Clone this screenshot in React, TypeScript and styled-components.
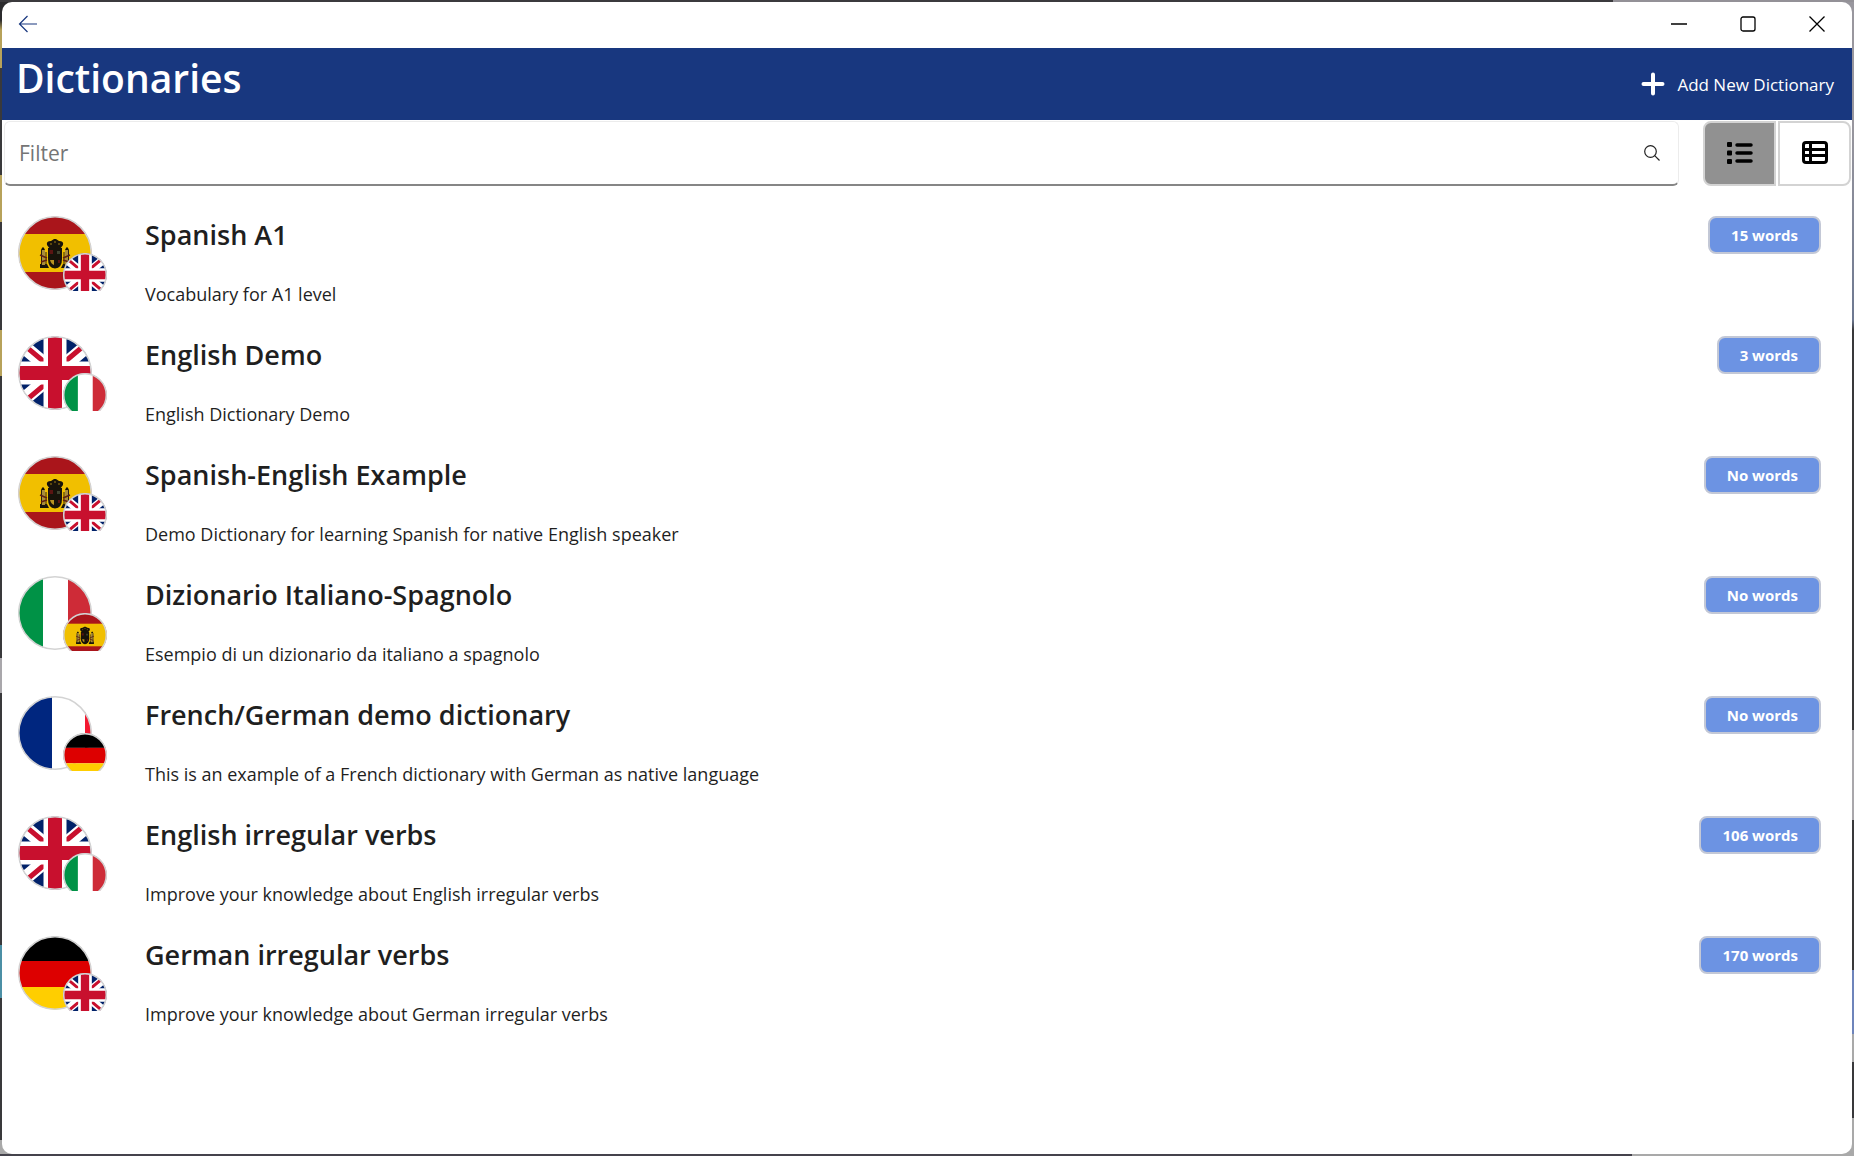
import React, { useId, useState } from "react";
import styled, { createGlobalStyle } from "styled-components";

const GlobalStyle = createGlobalStyle`
  * { box-sizing: border-box; }
  html, body { margin: 0; }
  body { font-family: "Open Sans", "Noto Sans", sans-serif; color: #1f1f1f; }
  button, input { font: inherit; color: inherit; }
`;

const Desktop = styled.div`
  min-height: 100vh;
  padding: 2px;
  display: flex;
  background:
    linear-gradient(90deg, #3b3a3d 87%, #939197 87%) top / 100% 2px no-repeat,
    linear-gradient(90deg, #45434c 88%, #a9a9a9 88%) bottom / 100% 2px no-repeat,
    linear-gradient(#99979e 0 120px, #6d7891 320px, #39393b 330px 730px, #a9a7ab 730px 820px,
      #39393b 820px 970px, #6e84bb 970px 1034px, #a9a9a9 1034px 1062px, #39393b 1062px 1118px, #a9a9a9 1118px)
      right / 50% 100% no-repeat,
    linear-gradient(#2b2b2d 0 20px, #b7a25a 30px 68px, #39393b 68px 175px, #b7a25a 175px 222px, #39393b 222px 330px,
      #b7a25a 330px 376px, #39393b 376px 658px, #a9a7ab 658px 693px, #39393b 693px 945px, #4b8fa5 945px 998px,
      #39393b 998px 1140px, #a9a9a9 1140px) left / 50% 100% no-repeat;
`;

const Window = styled.div`
  flex: 1;
  display: flex;
  flex-direction: column;
  background: #fff;
  border-radius: 10px;
  overflow: hidden;
`;

const TitleBar = styled.div`
  height: 46px;
  padding: 0 1px 2px 0;
  display: flex;
  justify-content: space-between;
  align-items: stretch;
`;

const Captions = styled.div`
  display: flex;
`;

const CaptionButton = styled.button<{ $width: number }>`
  width: ${(p) => p.$width}px;
  padding: 0;
  border: 0;
  background: none;
  display: grid;
  place-items: center;
`;

const Header = styled.header`
  height: 72px;
  padding: 0 18px 0 14px;
  display: flex;
  justify-content: space-between;
  background: #18377f;
  color: #fff;
`;

const Heading = styled.h1`
  margin: 0;
  font-size: 39px;
  line-height: 60px;
  font-weight: 600;
`;

const AddButton = styled.button`
  padding: 0;
  border: 0;
  background: none;
  display: flex;
  align-items: center;
  gap: 12px;
  font-size: 17px;
`;

const Toolbar = styled.div`
  height: 66px;
  padding: 1px 1px 0 2px;
  display: flex;
  gap: 24px;
`;

const FilterBox = styled.label`
  flex: 1;
  display: flex;
  align-items: center;
  padding: 0 18px 0 14px;
  border: 1px solid #ececec;
  border-bottom: 2px solid #868686;
  border-radius: 6px;
`;

const FilterInput = styled.input`
  flex: 1;
  min-width: 0;
  padding: 0;
  border: 0;
  outline: 0;
  background: none;
  font-size: 21px;
  line-height: 32px;
  &::placeholder { color: #757575; opacity: 1; }
`;

const ViewSwitch = styled.div`
  display: flex;
  gap: 2px;
`;

const ViewButton = styled.button<{ $side: "left" | "right" }>`
  width: 73px;
  padding: 0 0 2px;
  display: grid;
  place-items: center;
  border: 2px solid #d3d3d3;
  border-radius: ${(p) => (p.$side === "left" ? "8px 0 0 8px" : "0 8px 8px 0")};
  background: ${(p) => (p["aria-pressed"] ? "#919191" : "#fff")};
`;

const List = styled.ul`
  flex: 1;
  margin: 0;
  padding: 20px 31px 0 16px;
  list-style: none;
`;

const Row = styled.li`
  height: 120px;
  padding-top: 10px;
  display: grid;
  grid-template-columns: 90px 1fr auto;
  column-gap: 37px;
  align-items: start;
`;

const Avatar = styled.div`
  position: relative;
  width: 90px;
  height: 75px;
  overflow: hidden;
`;

const BadgeFlag = styled.div`
  position: absolute;
  left: 45px;
  top: 37px;
`;

const FlagSvg = styled.svg`
  display: block;
`;

const Name = styled.h2`
  margin: 0;
  font-size: 27px;
  line-height: 38px;
  font-weight: 600;
`;

const Description = styled.p`
  margin: 25px 0 0;
  font-size: 18px;
  line-height: 30px;
`;

const Count = styled.span`
  height: 38px;
  padding: 0 21px;
  display: flex;
  align-items: center;
  border: 2px solid #c3c8d6;
  border-radius: 8px;
  background: #6c93e3;
  color: #fff;
  font-size: 15px;
  font-weight: 700;
`;

type Country = "es" | "gb" | "it" | "fr" | "de";

function Spain() {
  return (
    <>
      <rect width="74" height="74" fill="#aa151b" />
      <rect y="18" width="74" height="38" fill="#f1bf00" />
      <g fill="#17130a">
        <path d="M29 29q-1-4 4-4l3-2h2l3 2q5 0 4 4l-3 4H32z" />
        <path d="M30 32h14v11q0 9-7 9.500Q30 52 30 43z" />
        <path d="M23 34l1-2 1-1 1 1 1 2zM47 34l1-2 1-1 1 1 1 2z" />
        <path d="M22 48h7l2 4h-9zM45 48h7v4h-9z" />
      </g>
      <path d="M25 34V49M49 34V49" stroke="#a98c3d" strokeWidth="4" />
      <path d="M23.500 34V49M28 36V50M46 36V50M50.500 34V49" stroke="#2a210c" strokeWidth="1" />
      <path d="M22 39l7 3M52 39l-7 3M23 46l6-2M51 46l-6-2" stroke="#5f2114" strokeWidth="1.500" />
      <path d="M31.500 34h3.500v4h-3.500zM40 44h2v3h-2z" fill="#5a1512" />
      <path d="M39 35h3v3h-3z" fill="#3e4430" />
      <path d="M32 44h4v5q-3-1-4-5z" fill="#b89322" />
      <path d="M32 28h2M36 26h2M40 28h2" stroke="#a07c13" strokeWidth="1" />
    </>
  );
}

function Britain() {
  return (
    <>
      <rect width="74" height="74" fill="#012169" />
      <path d="M-13 -5L87 79M-13 79L87 -5" stroke="#fff" strokeWidth="14" />
      <path d="M37 35L-13 -7M37 39L87 81M37 40L-13 82M37 34L87 -8" stroke="#c8102e" strokeWidth="5" />
      <path d="M37 0V74M0 37H74" stroke="#fff" strokeWidth="23" />
      <path d="M37 0V74M0 37H74" stroke="#c8102e" strokeWidth="14" />
    </>
  );
}

function Flag({ country, size }: { country: Country; size: number }) {
  const id = useId();
  return (
    <FlagSvg width={size} height={size} viewBox="0 0 74 74" aria-hidden="true">
      <clipPath id={id}>
        <circle cx="37" cy="37" r="36.500" />
      </clipPath>
      <g clipPath={`url(#${id})`}>
        {country === "es" && <Spain />}
        {country === "gb" && <Britain />}
        {country === "it" && (
          <>
            <rect width="74" height="74" fill="#fff" />
            <rect width="25" height="74" fill="#009246" />
            <rect x="50" width="24" height="74" fill="#ce2b37" />
          </>
        )}
        {country === "fr" && (
          <>
            <rect width="74" height="74" fill="#fff" />
            <rect width="34" height="74" fill="#00267f" />
            <rect x="67" width="7" height="74" fill="#f31830" />
          </>
        )}
        {country === "de" && (
          <>
            <rect width="74" height="25" fill="#000" />
            <rect y="25" width="74" height="26" fill="#d00" />
            <rect y="51" width="74" height="23" fill="#ffce00" />
          </>
        )}
      </g>
      <circle cx="37" cy="37" r={size > 50 ? 36.2 : 35.8} fill="none" stroke="#d3d3d3" strokeWidth={size > 50 ? 1.5 : 2.5} />
    </FlagSvg>
  );
}

interface Dictionary {
  name: string;
  description: string;
  count: string;
  from: Country;
  to: Country;
}

const dictionaries: Dictionary[] = [
  { name: "Spanish A1", description: "Vocabulary for A1 level", count: "15 words", from: "es", to: "gb" },
  { name: "English Demo", description: "English Dictionary Demo", count: "3 words", from: "gb", to: "it" },
  { name: "Spanish-English Example", description: "Demo Dictionary for learning Spanish for native English speaker", count: "No words", from: "es", to: "gb" },
  { name: "Dizionario Italiano-Spagnolo", description: "Esempio di un dizionario da italiano a spagnolo", count: "No words", from: "it", to: "es" },
  { name: "French/German demo dictionary", description: "This is an example of a French dictionary with German as native language", count: "No words", from: "fr", to: "de" },
  { name: "English irregular verbs", description: "Improve your knowledge about English irregular verbs", count: "106 words", from: "gb", to: "it" },
  { name: "German irregular verbs", description: "Improve your knowledge about German irregular verbs", count: "170 words", from: "de", to: "gb" },
];

export default function App() {
  const [view, setView] = useState<"list" | "table">("list");
  const [filter, setFilter] = useState("");
  const shown = dictionaries.filter((d) => d.name.toLowerCase().includes(filter.toLowerCase()));

  return (
    <>
      <GlobalStyle />
      <Desktop>
        <Window>
          <TitleBar>
            <CaptionButton $width={52} aria-label="Back">
              <svg width="20" height="18" viewBox="0 0 20 18" fill="none" stroke="#18377f" strokeWidth="1.200">
                <path d="M19 9H2M9.500 1L1.500 9L9.500 17" />
              </svg>
            </CaptionButton>
            <Captions>
              <CaptionButton $width={69} aria-label="Minimize">
                <svg width="16" height="16" viewBox="0 0 16 16" stroke="#000" strokeWidth="1.300">
                  <path d="M0 8H16" />
                </svg>
              </CaptionButton>
              <CaptionButton $width={69} aria-label="Maximize">
                <svg width="16" height="16" viewBox="0 0 16 16" fill="none" stroke="#000" strokeWidth="1.300">
                  <rect x="1" y="1" width="14" height="14" rx="2" />
                </svg>
              </CaptionButton>
              <CaptionButton $width={69} aria-label="Close">
                <svg width="16" height="16" viewBox="0 0 16 16" stroke="#000" strokeWidth="1.300">
                  <path d="M.5 .5L15.500 15.500M15.500 .5L.5 15.500" />
                </svg>
              </CaptionButton>
            </Captions>
          </TitleBar>
          <Header>
            <Heading>Dictionaries</Heading>
            <AddButton>
              <svg width="24" height="24" viewBox="0 0 24 24" stroke="#fff" strokeWidth="4" strokeLinecap="round">
                <path d="M12 2.500V21.500M2.500 12H21.500" />
              </svg>
              Add New Dictionary
            </AddButton>
          </Header>
          <Toolbar>
            <FilterBox>
              <FilterInput aria-label="Filter" placeholder="Filter" value={filter} onChange={(e) => setFilter(e.target.value)} />
              <svg width="16" height="16" viewBox="0 0 16 16" fill="none" stroke="#222" strokeWidth="1.200">
                <circle cx="6.500" cy="6.500" r="5.800" />
                <path d="M10.700 10.700L15.500 15.500" />
              </svg>
            </FilterBox>
            <ViewSwitch>
              <ViewButton $side="left" aria-label="List view" aria-pressed={view === "list"} onClick={() => setView("list")}>
                <svg width="26" height="22" viewBox="0 0 26 22">
                  <path d="M10 3H24M10 11H24M10 19H24" stroke="#000" strokeWidth="3.500" strokeLinecap="round" />
                  <rect y="0" width="5" height="5" rx="1" />
                  <rect y="8.500" width="5" height="5" rx="1" />
                  <rect y="17" width="5" height="5" rx="1" />
                </svg>
              </ViewButton>
              <ViewButton $side="right" aria-label="Table view" aria-pressed={view === "table"} onClick={() => setView("table")}>
                <svg width="26" height="23" viewBox="0 0 26 23" fill="none" stroke="#000" strokeWidth="3">
                  <rect x="1.500" y="1.500" width="23" height="20" rx="2.500" />
                  <path d="M8.500 1.500V21.500M1.500 8.500H24.500M1.500 14.500H24.500" />
                </svg>
              </ViewButton>
            </ViewSwitch>
          </Toolbar>
          <List>
            {shown.map((d) => (
              <Row key={d.name}>
                <Avatar>
                  <Flag country={d.from} size={74} />
                  <BadgeFlag>
                    <Flag country={d.to} size={44} />
                  </BadgeFlag>
                </Avatar>
                <div>
                  <Name>{d.name}</Name>
                  <Description>{d.description}</Description>
                </div>
                <Count>{d.count}</Count>
              </Row>
            ))}
          </List>
        </Window>
      </Desktop>
    </>
  );
}
